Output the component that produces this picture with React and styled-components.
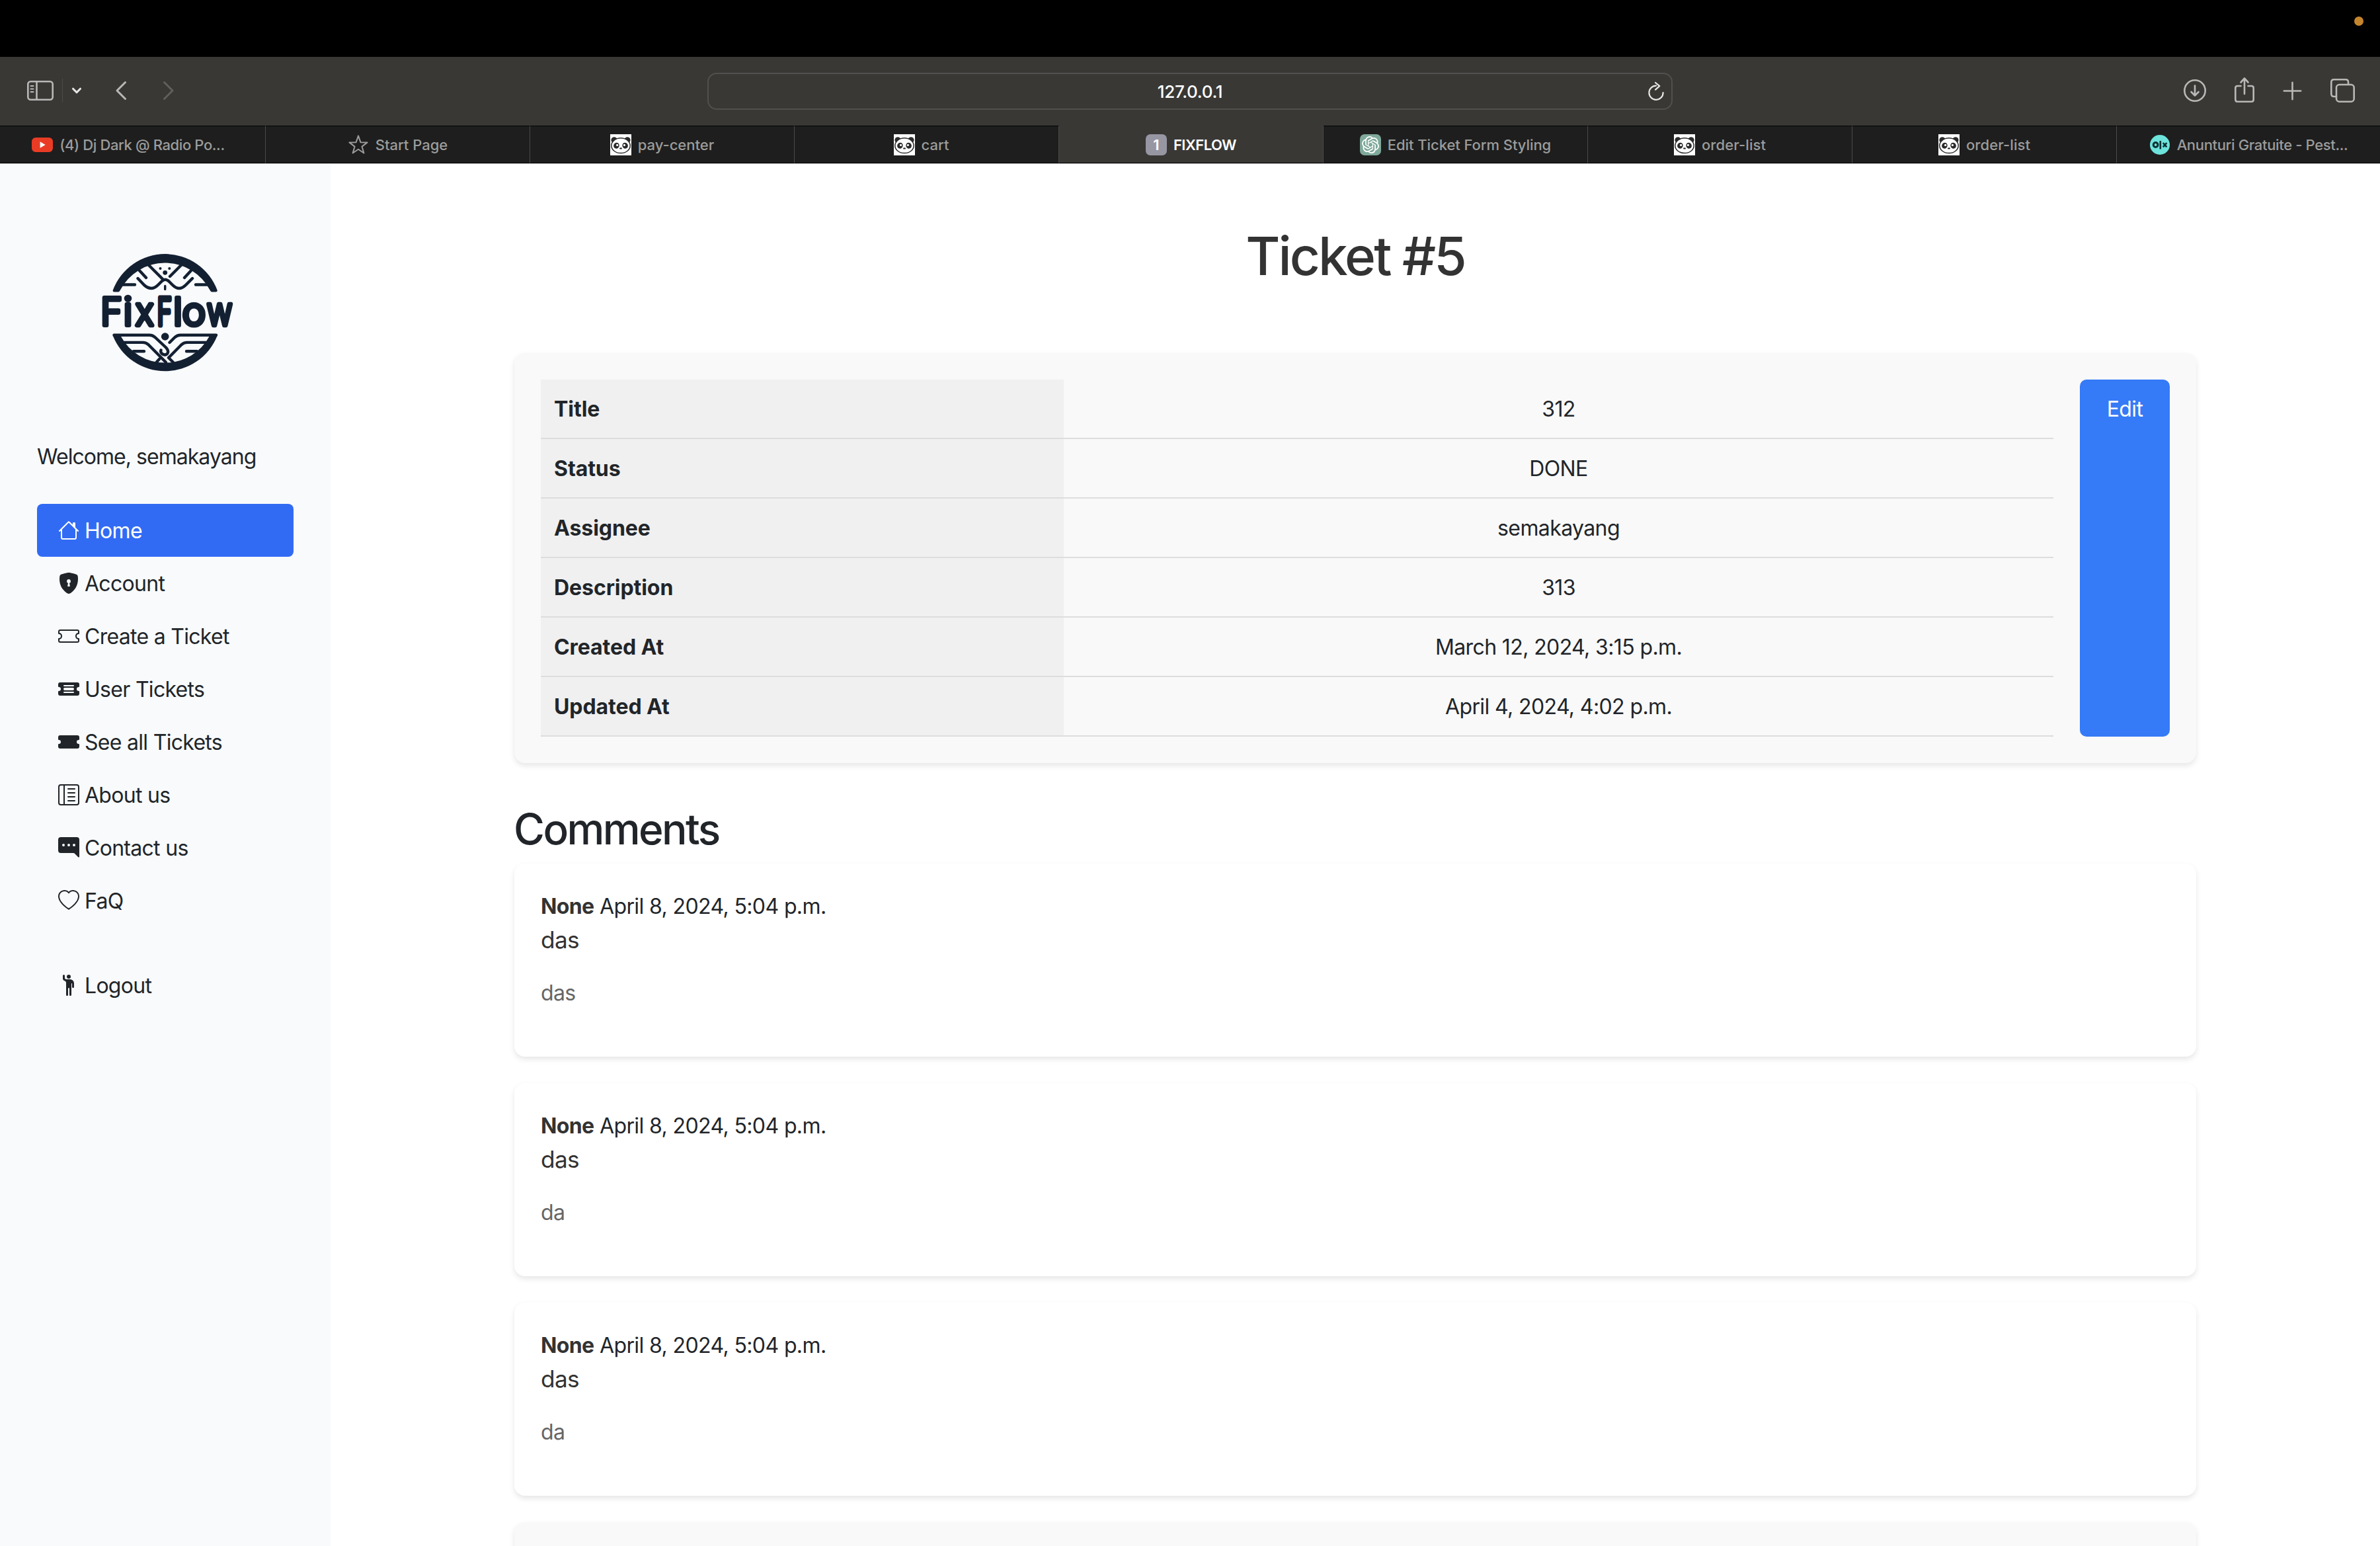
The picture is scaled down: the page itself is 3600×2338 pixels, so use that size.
import React from "react";
import styled, { createGlobalStyle, css } from "styled-components";
import {
  BsHouse,
  BsShieldLockFill,
  BsTicket,
  BsTicketDetailedFill,
  BsTicketFill,
  BsLayoutTextSidebarReverse,
  BsChatRightDotsFill,
  BsHeart,
  BsPersonRaisedHand,
} from "react-icons/bs";
import { SiOpenai } from "react-icons/si";

const GlobalStyle = createGlobalStyle`
  *, *::before, *::after { box-sizing: border-box; }
  html, body { margin: 0; padding: 0; background: #fff; }
  body {
    font-family: Inter, "Liberation Sans", sans-serif;
    font-size: 32px;
    line-height: 48px;
    letter-spacing: -0.019em;
    color: #212529;
    overflow: hidden;
  }
`;

const Screen = styled.div`
  display: flex;
  flex-direction: column;
  width: 3600px;
  height: 2338px;
  overflow: hidden;
`;

/* ---------- system bar and browser chrome ---------- */

const SystemBar = styled.div`
  flex: none;
  display: flex;
  justify-content: flex-end;
  height: 86px;
  padding: 25px 25px 0 0;
  background: #000;
`;

const RecordingDot = styled.span`
  width: 14px;
  height: 14px;
  border-radius: 50%;
  background: #c5852d;
`;

const Toolbar = styled.div`
  flex: none;
  display: grid;
  grid-template-columns: 1fr 1460px 1fr;
  align-items: center;
  height: 104px;
  background: #393835;
`;

const NavTools = styled.div`
  display: flex;
  align-items: center;
  height: 100%;
  padding: 0 0 2px 41px;
`;

const ToolSeparator = styled.span`
  width: 1px;
  height: 36px;
  margin: 0 14px 0 13px;
  background: #4d4c4a;
`;

const Glyph = styled.svg`
  display: block;
  flex: none;
  overflow: visible;
  fill: none;
  stroke: ${(p) => p.$color || "#b9b8b7"};
  stroke-width: ${(p) => p.$stroke || 2.6};
  stroke-linecap: round;
  stroke-linejoin: round;
  margin-left: ${(p) => p.$gap || 0}px;
`;

const AddressField = styled.div`
  display: grid;
  grid-template-columns: 1fr auto 1fr;
  align-items: center;
  height: 56px;
  border: 2px solid #51504e;
  border-radius: 14px;
  color: #fff;
`;

const Address = styled.span`
  grid-column: 2;
  padding-top: 1px;
  font-size: 26px;
  line-height: 32px;
  font-weight: 500;
  letter-spacing: -0.012em;
`;

const ReloadSlot = styled.span`
  justify-self: end;
  margin-right: 11px;
`;

const PageTools = styled.div`
  display: flex;
  align-items: center;
  justify-content: flex-end;
  height: 100%;
  padding: 0 38px 2px 0;
`;

const TabStrip = styled.div`
  flex: none;
  display: grid;
  grid-template-columns: 402px repeat(7, 400px) 1fr;
  height: 58px;
  border-bottom: 1px solid #c6c6c6;
  background: #1e1e1e;
`;

const Tab = styled.div`
  display: flex;
  align-items: center;
  justify-content: center;
  gap: 10px;
  padding-right: ${(p) => p.$nudge || 0}px;
  border-top: 1px solid ${(p) => (p.$active ? "#393835" : "#000")};
  border-bottom: 1px solid #000;
  border-right: 1px solid #4a4a49;
  background: ${(p) => (p.$active ? "#393835" : "#1e1e1e")};
  color: ${(p) => (p.$active ? "#fff" : "#9c9c9b")};
  font-size: 22px;
  line-height: 28px;
  font-weight: ${(p) => (p.$active ? 600 : 500)};
  letter-spacing: ${(p) => p.$track || 0}px;
  white-space: nowrap;
  &:last-child { border-right: 0; }
`;

const Favicon = styled.span`
  flex: none;
  display: flex;
  align-items: center;
  justify-content: center;
  width: 32px;
  height: 32px;
  border-radius: ${(p) => p.$radius || 0}px;
  background: ${(p) => p.$bg || "transparent"};
  color: #fff;
  font-size: 22px;
  letter-spacing: 0;
  svg { display: block; flex: none; }
`;

/* ---------- page ---------- */

const Page = styled.div`
  flex: 1;
  display: flex;
  min-height: 0;
`;

const Sidebar = styled.aside`
  flex: none;
  display: flex;
  flex-direction: column;
  width: 500px;
  padding: 112px 56px 0;
  background: #f8fafc;
`;

const LogoSlot = styled.div`
  display: flex;
  justify-content: center;
  height: 307px;
`;

const Welcome = styled.p`
  margin: 0 0 47px;
  letter-spacing: -0.03em;
`;

const NavList = styled.nav`
  display: flex;
  flex-direction: column;
`;

const NavItem = styled.a`
  display: flex;
  align-items: center;
  gap: 8px;
  height: 80px;
  padding: 0 32px;
  border-radius: 8px;
  letter-spacing: -0.022em;
  white-space: nowrap;
  ${(p) =>
    p.$active &&
    css`
      background: #316bf4;
      color: #fff;
    `}
  svg { flex: none; width: 32px; height: 32px; }
`;

const NavLabel = styled.span`
  padding-top: 2px;
`;

const NavBreak = styled.hr`
  width: 100%;
  height: 0;
  margin: 24px 0;
  border: 0;
`;

const Main = styled.main`
  flex: 1;
  min-width: 0;
  padding: 91px 278px 0;
`;

const Title = styled.h1`
  margin: 0;
  height: 195px;
  font-size: 80px;
  line-height: 96px;
  font-weight: 500;
  letter-spacing: -0.036em;
  text-align: center;
  color: #333;
`;

const Card = styled.section`
  padding: 40px;
  border-radius: 16px;
  background: ${(p) => (p.$tinted ? "#f9f9f9" : "#fff")};
  box-shadow: 0 4px 8px rgba(0, 0, 0, 0.1);
`;

const TicketCard = styled(Card)`
  display: flex;
  gap: 40px;
  height: 620px;
`;

const Fields = styled.dl`
  flex: 1;
  display: flex;
  flex-direction: column;
  margin: 0;
`;

const Field = styled.div`
  display: grid;
  grid-template-columns: 791px 1fr;
  height: 90px;
  border-bottom: 2px solid #ddd;
`;

const FieldName = styled.dt`
  padding: 21px 20px 19px;
  background: #f0f0f0;
  font-weight: 700;
  letter-spacing: -0.002em;
`;

const FieldValue = styled.dd`
  margin: 0;
  padding: 21px 20px 19px;
  text-align: center;
`;

const EditButton = styled.a`
  flex: none;
  width: 136px;
  padding-top: 21px;
  border-radius: 10px;
  background: #357af6;
  color: #fff;
  text-align: center;
`;

const SectionTitle = styled.h2`
  margin: 0 0 14px -1px;
  padding-top: 62px;
  font-size: 64px;
  line-height: 76px;
  font-weight: 500;
  letter-spacing: -0.04em;
`;

const CommentList = styled.div`
  display: flex;
  flex-direction: column;
  gap: 40px;
`;

const CommentCard = styled(Card)`
  height: 292px;
  padding-top: 41px;
`;

const CommentMeta = styled.div`
  strong { font-weight: 700; color: #333; }
`;

const CommentTitle = styled.p`
  margin: 0 0 30px;
  font-size: 35.2px;
  line-height: 53px;
  color: #333;
`;

const CommentBody = styled.p`
  margin: 0;
  color: #666;
`;

/* ---------- drawings ---------- */

const SidebarGlyph = () => (
  <Glyph width="40" height="30" viewBox="0 0 40 30">
    <rect x="1.3" y="1.3" width="37.4" height="27.4" rx="4" />
    <path d="M14.5 1.5V28.5" />
    <path d="M5.5 8H9.5M5.5 12.5H9.5M5.5 17H9.5" strokeWidth="2" />
  </Glyph>
);

const DownloadGlyph = () => (
  <Glyph width="34" height="34" viewBox="0 0 34 34">
    <circle cx="17" cy="17" r="15.7" />
    <path d="M17 9.5V24M11.5 19L17 24.5L22.5 19" />
  </Glyph>
);

const ShareGlyph = () => (
  <Glyph $gap={43} width="30" height="42" viewBox="0 0 30 42">
    <path d="M9.5 14H4.5Q1.3 14 1.3 17V34.5Q1.3 37.7 4.5 37.7H25.5Q28.7 37.7 28.7 34.5V17Q28.7 14 25.5 14H20.5" />
    <path d="M15 26V3M9.5 8.5L15 2.5L20.5 8.5" />
  </Glyph>
);

const PlusGlyph = () => (
  <Glyph $gap={44} width="27" height="27" viewBox="0 0 27 27">
    <path d="M13.5 0.8V26.2M0.8 13.5H26.2" />
  </Glyph>
);

const TabsGlyph = () => (
  <Glyph $gap={44} width="37" height="36" viewBox="0 0 37 36">
    <path d="M9 27H5.5Q1.3 27 1.3 23V5.3Q1.3 1.3 5.5 1.3H23Q27 1.3 27 5.3V8.5" />
    <rect x="9" y="9" width="26.7" height="25.7" rx="4.5" />
  </Glyph>
);

const ReloadGlyph = () => (
  <Glyph $color="#e6e6e5" $stroke={2.2} width="24" height="28" viewBox="0 0 24 28">
    <path d="M12 5.6A10.6 10.6 0 1 0 22.6 16" />
    <path d="M11 1L17.2 6.2L11 11.6" />
  </Glyph>
);

const YoutubeIcon = () => (
  <svg width="32" height="22" viewBox="0 0 32 22">
    <rect width="32" height="22" rx="6" fill="#ea3c25" />
    <path d="M12.6 6.2L20.6 11L12.6 15.8Z" fill="#fff" />
  </svg>
);

const StarIcon = () => (
  <svg width="32" height="32" viewBox="0 0 32 32" fill="none" stroke="#9c9c9b" strokeWidth="2" strokeLinejoin="round">
    <path d="M16 2.4L19.4 12.2L29.6 12.4L21.5 18.6L24.4 28.5L16 22.7L7.6 28.5L10.5 18.6L2.4 12.4L12.6 12.2Z" />
  </svg>
);

const PandaIcon = () => (
  <svg width="32" height="32" viewBox="0 0 32 32">
    <circle cx="6" cy="8.8" r="4.6" fill="#2b2b2b" />
    <circle cx="26" cy="8.8" r="4.6" fill="#2b2b2b" />
    <ellipse cx="16" cy="17.2" rx="14.2" ry="11.4" fill="#fff" stroke="#2b2b2b" strokeWidth="1.5" />
    <ellipse cx="9.4" cy="17.2" rx="4.2" ry="4.6" transform="rotate(25 9.4 17.2)" fill="#2b2b2b" />
    <ellipse cx="22.6" cy="17.2" rx="4.2" ry="4.6" transform="rotate(-25 22.6 17.2)" fill="#2b2b2b" />
    <circle cx="10.6" cy="16.4" r="1.6" fill="#fff" />
    <circle cx="21.4" cy="16.4" r="1.6" fill="#fff" />
    <ellipse cx="16" cy="21.4" rx="2" ry="1.2" fill="#2b2b2b" />
  </svg>
);

const OlxIcon = () => (
  <svg width="32" height="32" viewBox="0 0 32 32">
    <circle cx="16" cy="16" r="15" fill="#6de3db" />
    <circle cx="9.6" cy="16" r="3.4" fill="none" stroke="#0d2f33" strokeWidth="3" />
    <path d="M16.8 10V22.5" stroke="#0d2f33" strokeWidth="2.6" />
    <path d="M20.8 13L26.4 19.4M26.4 13L20.8 19.4" stroke="#0d2f33" strokeWidth="2.6" />
  </svg>
);

const WordmarkLetter = styled.text`
  font-family: Inter, sans-serif;
  font-size: 58px;
  font-weight: 300;
  letter-spacing: 0;
  fill: #132032;
  stroke: #132032;
  stroke-width: 6px;
  stroke-linejoin: round;
  vector-effect: non-scaling-stroke;
`;

const wordmark = [
  ["F", 32.2, 0.96],
  ["i", 66.8, 1],
  ["x", 84.9, 0.89],
  ["F", 117.4, 0.665],
  ["l", 142.3, 1],
  ["o", 155.6, 1.04],
  ["w", 193, 0.81],
];

const FixFlowLogo = () => (
  <svg width="260" height="220" viewBox="0 0 260 220" fill="none">
    <g stroke="#132032" strokeLinecap="round" strokeLinejoin="round" strokeWidth="4.4">
      <path d="M50.7 79A84.3 84.3 0 0 1 208.7 79Q209 81.500 206.500 81.500H200.500Q199 81.500 198 79.500A76.600 76.600 0 0 0 61.400 79.500Q60.400 81.500 59 81.500H53Q50.200 81.500 50.700 79Z" fill="#132032" stroke="none" />
      <path d="M66 70.500H84M176 70.500H194" />
      <path d="M89 47L101 60M171 47L159 60" />
      <path d="M104 40L127 63M155 40L137 58" />
      <path d="M88.500 61L98 71Q109 81 119 71L125 65Q130 60.500 135 65L141 71Q151 81 161 71L171 61" />
      <path d="M129.700 72.500V77.500" strokeWidth="3.4" />
      <circle cx="129.700" cy="52.300" r="3.400" fill="#132032" stroke="none" />
      <circle cx="122.500" cy="46" r="2" fill="#132032" stroke="none" />
      <circle cx="136.300" cy="46" r="2" fill="#132032" stroke="none" />
      <path d="M50.700 147.500A84.900 84.900 0 0 0 208.700 147.500L197 148A76 76 0 0 1 62.500 148Z" fill="#132032" stroke="none" />
      <path d="M52.500 146.700H106Q111 146.700 115 150.500L131 165.500Q136 171 133 175Q129 178.500 124.500 174.500Q122.500 172 123.500 169.500" />
      <path d="M207 146.700H153Q148 146.700 144 150.500L136.500 158" />
      <path d="M67 157.900H96Q101 157.900 105 161.700L131 188" />
      <path d="M193 157.900H163Q158 157.900 154 161.700L135 181L142 188M121 183L116.500 188" />
      <path d="M82 171.200H98M162 171.200H178" />
      <circle cx="129.700" cy="149" r="5.800" fill="#132032" stroke="none" />
    </g>
    {wordmark.map(([ch, x, sx], i) => (
      <WordmarkLetter key={i} transform={`translate(${x} 132.2) scale(${sx} 1)`}>
        {ch}
      </WordmarkLetter>
    ))}
  </svg>
);

/* ---------- data ---------- */

const panda = (
  <Favicon $bg="#fff">
    <PandaIcon />
  </Favicon>
);

const tabs = [
  { label: "(4) Dj Dark @ Radio Po...", nudge: 13, track: -0.38, icon: <Favicon><YoutubeIcon /></Favicon> },
  { label: "Start Page", icon: <Favicon><StarIcon /></Favicon> },
  { label: "pay-center", icon: panda },
  { label: "cart", nudge: 16, icon: panda },
  { label: "FIXFLOW", active: true, track: -0.5, icon: <Favicon $bg="#9796a3" $radius={7}>1</Favicon> },
  {
    label: "Edit Ticket Form Styling",
    track: -0.07,
    icon: <Favicon $bg="#7fa99b" $radius={7}><SiOpenai size={26} /></Favicon>,
  },
  { label: "order-list", track: 0.1, icon: panda },
  { label: "order-list", track: 0.1, icon: panda },
  { label: "Anunturi Gratuite - Pest...", track: -0.35, icon: <Favicon><OlxIcon /></Favicon> },
];

const links = [
  { label: "Home", icon: BsHouse, active: true },
  { label: "Account", icon: BsShieldLockFill },
  { label: "Create a Ticket", icon: BsTicket },
  { label: "User Tickets", icon: BsTicketDetailedFill },
  { label: "See all Tickets", icon: BsTicketFill },
  { label: "About us", icon: BsLayoutTextSidebarReverse },
  { label: "Contact us", icon: BsChatRightDotsFill },
  { label: "FaQ", icon: BsHeart },
];

const fields = [
  ["Title", "312"],
  ["Status", "DONE"],
  ["Assignee", "semakayang"],
  ["Description", "313"],
  ["Created At", "March 12, 2024, 3:15 p.m."],
  ["Updated At", "April 4, 2024, 4:02 p.m."],
];

const comments = [
  { title: "das", body: "das" },
  { title: "das", body: "da" },
  { title: "das", body: "da" },
];

export default function App() {
  return (
    <Screen>
      <GlobalStyle />
      <SystemBar>
        <RecordingDot />
      </SystemBar>
      <Toolbar>
        <NavTools>
          <SidebarGlyph />
          <ToolSeparator />
          <Glyph $color="#e8e8e7" $stroke={3} width="14" height="8" viewBox="0 0 14 8">
            <path d="M1.5 1.2L7 6.8L12.5 1.2" />
          </Glyph>
          <Glyph $gap={52} $stroke={3} width="16" height="28" viewBox="0 0 16 28">
            <path d="M14.5 1.5L2 14L14.5 26.5" />
          </Glyph>
          <Glyph $gap={56} $color="#605f5d" $stroke={3} width="16" height="28" viewBox="0 0 16 28">
            <path d="M1.5 1.5L14 14L1.5 26.5" />
          </Glyph>
        </NavTools>
        <AddressField>
          <Address>127.0.0.1</Address>
          <ReloadSlot>
            <ReloadGlyph />
          </ReloadSlot>
        </AddressField>
        <PageTools>
          <DownloadGlyph />
          <ShareGlyph />
          <PlusGlyph />
          <TabsGlyph />
        </PageTools>
      </Toolbar>
      <TabStrip>
        {tabs.map((t, i) => (
          <Tab key={i} $active={t.active} $nudge={t.nudge} $track={t.track}>
            {t.icon}
            <span>{t.label}</span>
          </Tab>
        ))}
      </TabStrip>
      <Page>
        <Sidebar>
          <LogoSlot>
            <FixFlowLogo />
          </LogoSlot>
          <Welcome>Welcome, semakayang</Welcome>
          <NavList>
            {links.map(({ label, icon: Icon, active }) => (
              <NavItem key={label} $active={active}>
                <Icon />
                <NavLabel>{label}</NavLabel>
              </NavItem>
            ))}
            <NavBreak />
            <NavItem>
              <BsPersonRaisedHand />
              <NavLabel>Logout</NavLabel>
            </NavItem>
          </NavList>
        </Sidebar>
        <Main>
          <Title>Ticket #5</Title>
          <TicketCard $tinted>
            <Fields>
              {fields.map(([name, value]) => (
                <Field key={name}>
                  <FieldName>{name}</FieldName>
                  <FieldValue>{value}</FieldValue>
                </Field>
              ))}
            </Fields>
            <EditButton>Edit</EditButton>
          </TicketCard>
          <SectionTitle>Comments</SectionTitle>
          <CommentList>
            {comments.map((c, i) => (
              <CommentCard key={i}>
                <CommentMeta>
                  <strong>None</strong> April 8, 2024, 5:04 p.m.
                </CommentMeta>
                <CommentTitle>{c.title}</CommentTitle>
                <CommentBody>{c.body}</CommentBody>
              </CommentCard>
            ))}
            <Card $tinted />
          </CommentList>
        </Main>
      </Page>
    </Screen>
  );
}
